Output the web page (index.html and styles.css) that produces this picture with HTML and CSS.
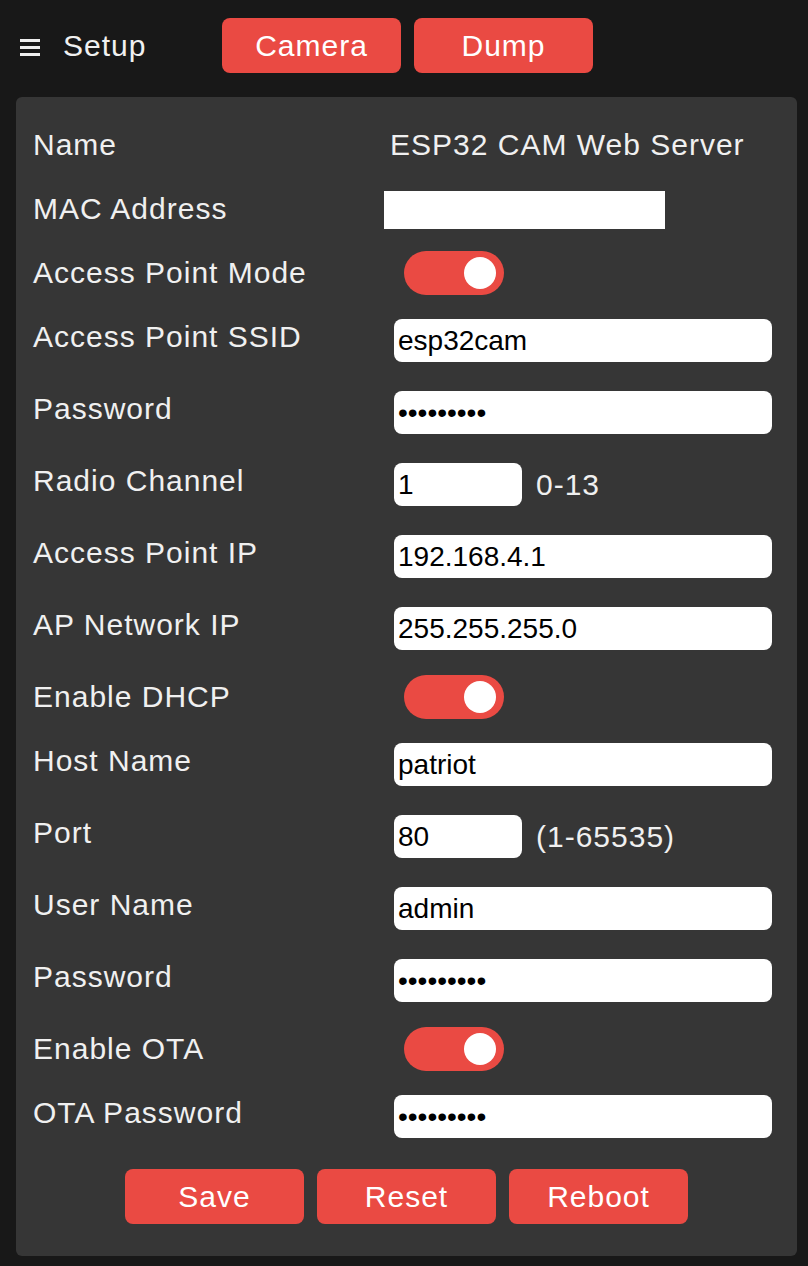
FILE: index.html
```html
<!DOCTYPE html>
<html lang="en">
<head>
<meta charset="utf-8">
<title>Setup</title>
<link rel="stylesheet" href="styles.css">
</head>
<body>
<header class="topbar">
  <svg class="burger" width="20" height="17" viewBox="0 0 20 17" aria-hidden="true">
    <rect x="0" y="0" width="20" height="3" fill="#eeeeee"/>
    <rect x="0" y="7" width="20" height="3" fill="#eeeeee"/>
    <rect x="0" y="14" width="20" height="3" fill="#eeeeee"/>
  </svg>
  <span class="title">Setup</span>
  <button class="btn">Camera</button>
  <button class="btn">Dump</button>
</header>

<main class="panel">
  <div class="row">
    <div class="label">Name</div>
    <div class="value"><span class="static">ESP32 CAM Web Server</span></div>
  </div>
  <div class="row">
    <div class="label">MAC Address</div>
    <div class="value"><span class="mac"></span></div>
  </div>
  <div class="row">
    <div class="label">Access Point Mode</div>
    <div class="value"><span class="toggle"><span class="knob"></span></span></div>
  </div>
  <div class="row tall">
    <div class="label">Access Point SSID</div>
    <div class="value"><input class="field" type="text" value="esp32cam"></div>
  </div>
  <div class="row tall">
    <div class="label">Password</div>
    <div class="value"><input class="field" type="password" value="123456789"></div>
  </div>
  <div class="row tall">
    <div class="label">Radio Channel</div>
    <div class="value"><input class="field small" type="text" value="1"><span class="hint">0-13</span></div>
  </div>
  <div class="row tall">
    <div class="label">Access Point IP</div>
    <div class="value"><input class="field" type="text" value="192.168.4.1"></div>
  </div>
  <div class="row tall">
    <div class="label">AP Network IP</div>
    <div class="value"><input class="field" type="text" value="255.255.255.0"></div>
  </div>
  <div class="row">
    <div class="label">Enable DHCP</div>
    <div class="value"><span class="toggle"><span class="knob"></span></span></div>
  </div>
  <div class="row tall">
    <div class="label">Host Name</div>
    <div class="value"><input class="field" type="text" value="patriot"></div>
  </div>
  <div class="row tall">
    <div class="label">Port</div>
    <div class="value"><input class="field small" type="text" value="80"><span class="hint">(1-65535)</span></div>
  </div>
  <div class="row tall">
    <div class="label">User Name</div>
    <div class="value"><input class="field" type="text" value="admin"></div>
  </div>
  <div class="row tall">
    <div class="label">Password</div>
    <div class="value"><input class="field" type="password" value="123456789"></div>
  </div>
  <div class="row">
    <div class="label">Enable OTA</div>
    <div class="value"><span class="toggle"><span class="knob"></span></span></div>
  </div>
  <div class="row tall">
    <div class="label">OTA Password</div>
    <div class="value"><input class="field" type="password" value="123456789"></div>
  </div>

  <div class="actions">
    <button class="btn">Save</button>
    <button class="btn">Reset</button>
    <button class="btn">Reboot</button>
  </div>
</main>
</body>
</html>
```

FILE: styles.css
```css
* { box-sizing: border-box; }

html, body {
  margin: 0;
  padding: 0;
  background: #181818;
}

body {
  font-family: "Liberation Sans", Arial, sans-serif;
  color: #f0f0f0;
  padding: 0 11px 10px 16px;
}

.topbar {
  height: 97px;
  padding: 18px 0 24px 4px;
  display: flex;
  align-items: center;
}

.burger {
  display: block;
  margin-top: 4px;
  flex: none;
}

.title {
  font-size: 30px;
  letter-spacing: 1px;
  margin-left: 23px;
  width: 159px;
  flex: none;
  color: #f0f0f0;
}

.btn {
  width: 179px;
  height: 55px;
  border: none;
  border-radius: 8px;
  background: #ea4a43;
  color: #ffffff;
  font-family: "Liberation Sans", Arial, sans-serif;
  font-size: 30px;
  letter-spacing: 1px;
  padding: 0;
  margin: 0;
  flex: none;
}

.topbar .btn + .btn { margin-left: 13px; }

.panel {
  background: #363636;
  border-radius: 6px;
  padding: 16px 0 32px 17px;
}

.row {
  display: grid;
  grid-template-columns: 351px 1fr;
  height: 64px;
}

.row.tall { height: 72px; }

.label {
  font-size: 30px;
  letter-spacing: 1px;
  line-height: 64px;
  white-space: nowrap;
  color: #f0f0f0;
}

.value {
  display: flex;
  align-items: center;
}

.static {
  font-size: 30px;
  letter-spacing: 1px;
  padding-left: 6px;
  color: #f0f0f0;
  white-space: nowrap;
}

.mac {
  display: block;
  width: 281px;
  height: 38px;
  background: #ffffff;
  margin-top: 2px;
}

.toggle {
  display: flex;
  align-items: center;
  justify-content: flex-end;
  width: 100px;
  height: 44px;
  margin-left: 20px;
  border-radius: 22px;
  background: #ea4a43;
  padding-right: 8px;
}

.knob {
  display: block;
  width: 32px;
  height: 32px;
  border-radius: 50%;
  background: #ffffff;
}

.field {
  width: 378px;
  height: 43px;
  margin: -1px 0 0 10px;
  border: none;
  outline: none;
  border-radius: 8px;
  background: #ffffff;
  color: #000000;
  font-family: "Liberation Sans", Arial, sans-serif;
  font-size: 28px;
  padding: 0 4px;
}

.field.small { width: 128px; }

.hint {
  margin-left: 14px;
  font-size: 30px;
  letter-spacing: 1px;
  color: #f0f0f0;
  white-space: nowrap;
}

.actions {
  display: flex;
  justify-content: center;
  gap: 13px;
  margin-top: 16px;
  padding-right: 17px;
}
```
